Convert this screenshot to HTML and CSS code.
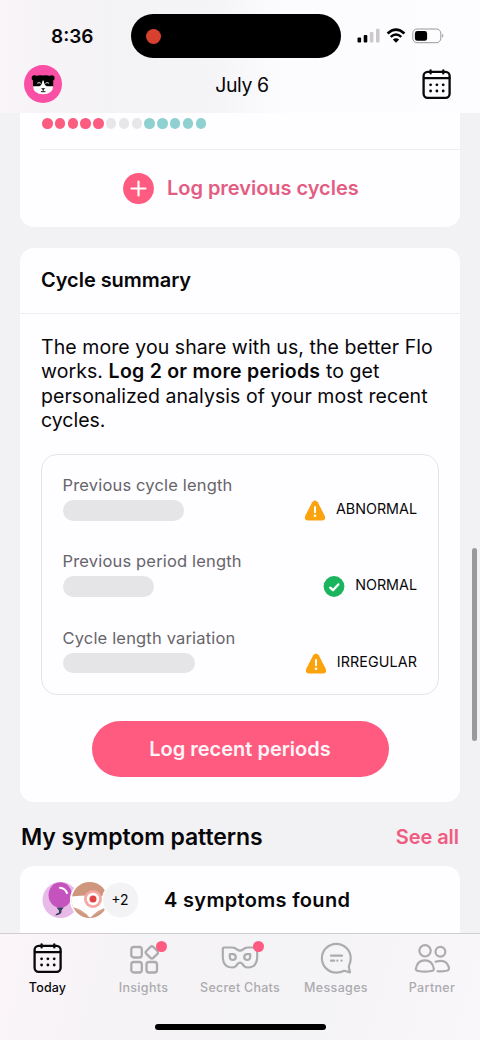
FILE: index.html
```html
<!DOCTYPE html>
<html lang="en">
<head>
<meta charset="utf-8">
<title>Flo</title>
<link rel="stylesheet" href="styles.css">
</head>
<body>
<svg width="0" height="0" class="defs">
  <symbol id="calendar" viewBox="0 0 30 31">
    <rect x="1.6" y="2.8" width="26" height="26" rx="4" fill="none" stroke="currentColor" stroke-width="2.3"/>
    <path d="M2 9.100H27.500M8.600 1.500V4.400M21.300 1.500V4.400" fill="none" stroke="currentColor" stroke-width="2.300" stroke-linecap="round"/>
    <g fill="currentColor"><circle cx="8.600" cy="15.800" r="1.400"/><circle cx="14.900" cy="15.800" r="1.400"/><circle cx="21.200" cy="15.800" r="1.400"/><circle cx="8.600" cy="22" r="1.400"/><circle cx="14.900" cy="22" r="1.400"/><circle cx="21.200" cy="22" r="1.400"/></g>
  </symbol>
  <symbol id="warning" viewBox="0 0 22 21">
    <path d="M8.200 2.200Q11-1.400 13.800 2.200L20.600 15.600Q22.400 20.400 18 20.500H4Q-.4 20.400 1.400 15.600Z" fill="#faa30f"/>
    <path d="M11 7V12.200" stroke="#fff" stroke-width="2" stroke-linecap="round"/><circle cx="11" cy="15.800" r="1.300" fill="#fff"/>
  </symbol>
</svg>
<div class="phone">
  <header class="header">
    <div class="status">
      <span class="time">8:36</span>
      <div class="island"><i class="rec"></i></div>
      <div class="signals">
        <svg width="23" height="16" viewBox="0 0 23 16"><rect x=".5" y="9.500" width="3.600" height="5" rx="1"/><rect x="6.700" y="7" width="3.600" height="7.500" rx="1"/><g fill="#cbc9cc"><rect x="12.800" y="4" width="3.600" height="10.500" rx="1"/><rect x="19" y=".8" width="3.600" height="13.700" rx="1"/></g></svg>
        <svg width="20" height="16" viewBox="0 0 20 16"><path d="M1.600 5.400Q10-2.300 18.400 5.400" fill="none" stroke="#000" stroke-width="2.700"/><path d="M4.700 8.900Q10 4.200 15.300 8.900" fill="none" stroke="#000" stroke-width="2.500"/><path d="M6.800 11.600Q10 8.800 13.200 11.600L10 14.800Z"/></svg>
        <svg width="32" height="16" viewBox="0 0 32 16"><rect x=".8" y="1" width="28" height="13.700" rx="4.300" fill="none" stroke="#98969a"/><rect x="2.900" y="3" width="12.200" height="9.800" rx="2.400"/><path d="M30.200 5.800Q32.500 7.800 30.200 10Z" fill="#98969a"/></svg>
      </div>
    </div>
    <div class="titlebar">
      <svg class="avatar" width="38" height="38" viewBox="0 0 38 38"><circle cx="19" cy="19" r="19" fill="#f94fa5"/><circle cx="10.500" cy="13" r="2.800"/><circle cx="27.800" cy="13" r="2.800"/><path d="M9 13Q12 9.500 19 10.400Q26 9.500 29.200 13V22H9Z"/><path d="M9 21.300H15.200Q17.800 20.800 18.600 15.500H19.600Q20.400 20.800 23 21.300H29.200Q28.700 29.200 19.100 29.200Q9.500 29.200 9 21.300Z" fill="#fff"/><path d="M13.200 18.300Q15 16.900 16.800 18.300M21.400 18.300Q23.200 16.900 25 18.300" fill="none" stroke="#fff" stroke-width=".9"/><path d="M17 23.200H21.400L19.200 25Z"/><path d="M19.200 24V26.400M16.900 26.700H21.500" stroke="#000" stroke-width=".9"/></svg>
      <h1>July 6</h1>
      <svg class="cal" width="30" height="31"><use href="#calendar"/></svg>
    </div>
  </header>

  <main class="content">
    <section class="card cycles">
      <div class="dots"><i class="p"></i><i class="p"></i><i class="p"></i><i class="p"></i><i class="p"></i><i></i><i></i><i></i><i class="f"></i><i class="f"></i><i class="f"></i><i class="f"></i><i class="f"></i></div>
      <a class="log-link"><svg width="31" height="31" viewBox="0 0 31 31"><circle cx="15.500" cy="15.500" r="15.400" fill="#ff5a7f"/><path d="M8.500 15.500H22.500M15.500 8.500V22.500" stroke="#fff" stroke-width="2.200" stroke-linecap="round"/></svg><span>Log previous cycles</span></a>
    </section>

    <section class="card summary">
      <h2>Cycle summary</h2>
      <p class="copy"><span class="l1">The more you share with us, the better Flo</span><br><span class="l2">works. <b>Log 2 or more periods</b> to get</span><br><span class="l3">personalized analysis of your most recent</span><br>cycles.</p>
      <div class="stats">
        <div class="stat">
          <div><span class="label">Previous cycle length</span><i class="bar long"></i></div>
          <div class="verdict"><svg width="22" height="21"><use href="#warning"/></svg><span>ABNORMAL</span></div>
        </div>
        <div class="stat">
          <div><span class="label">Previous period length</span><i class="bar short"></i></div>
          <div class="verdict"><svg width="22" height="21" viewBox="0 0 22 21"><circle cx="11" cy="10.500" r="10.400" fill="#19b45d"/><path d="M7.200 11.700L10 14.200L15.300 8.500" fill="none" stroke="#fff" stroke-width="2.400" stroke-linecap="round" stroke-linejoin="round"/></svg><span>NORMAL</span></div>
        </div>
        <div class="stat">
          <div><span class="label">Cycle length variation</span><i class="bar longer"></i></div>
          <div class="verdict"><svg width="22" height="21"><use href="#warning"/></svg><span class="wide">IRREGULAR</span></div>
        </div>
      </div>
      <button class="cta">Log recent periods</button>
    </section>

    <div class="section-head"><h3>My symptom patterns</h3><a>See all</a></div>

    <section class="card symptoms">
      <svg width="97" height="38" viewBox="0 0 97 38">
        <defs><clipPath id="c1"><circle cx="18.500" cy="19" r="18"/></clipPath><clipPath id="c2"><circle cx="47.700" cy="19" r="18"/></clipPath></defs>
        <g clip-path="url(#c1)"><rect width="38" height="38" fill="#e8bae8"/><ellipse cx="18.200" cy="14" rx="11.700" ry="12.700" fill="#c553bd"/><path d="M18 6.800Q23 7.300 25 12" fill="none" stroke="#fff" stroke-width="2" stroke-linecap="round"/><path d="M14.500 26.500H21.800L19.500 29.300Q20.500 33.500 13.500 34.500Q13.500 32.500 16.700 32L17 29.500Z" fill="#33405f"/></g>
        <circle cx="47.700" cy="19" r="19.800" fill="#fff"/>
        <g clip-path="url(#c2)"><rect x="29" width="38" height="38" fill="#cf967e"/><path d="M29 15.500Q48 13.500 67 15.500V25L48 36L29 25Z" fill="#fff"/><path d="M29 25Q41 27 48 36M67 25Q56 27 48 36" fill="#cf967e" stroke="#fff" stroke-width="1.400"/><circle cx="51" cy="18" r="9" fill="#f6a6a3"/><circle cx="51" cy="18" r="6.200" fill="#fff"/><circle cx="51" cy="18" r="3.500" fill="#e34344"/></g>
        <circle cx="78.700" cy="19" r="18.800" fill="#fff"/><circle cx="78.700" cy="19" r="17.600" fill="#f3f2f5"/>
        <text x="77.800" y="24" text-anchor="middle" class="more">+2</text>
      </svg>
      <strong>4 symptoms found</strong>
    </section>
    <i class="scrollbar"></i>
  </main>

  <nav class="tabs">
    <a class="tab active"><svg width="30" height="31"><use href="#calendar"/></svg><span>Today</span></a>
    <a class="tab"><svg width="30" height="31" viewBox="0 0 30 31" fill="none" stroke="currentColor" stroke-width="2.300"><rect x="2.300" y="4" width="10.500" height="10.500" rx="2.500"/><rect x="2.300" y="19" width="10.500" height="10.500" rx="2.500"/><rect x="17.500" y="19" width="10.500" height="10.500" rx="2.500"/><rect x="18" y="4.500" width="9.800" height="9.800" rx="2" transform="rotate(45 22.900 9.400)"/></svg><span>Insights</span><i class="badge"></i></a>
    <a class="tab"><svg width="38" height="31" viewBox="0 0 38 31" fill="none" stroke="currentColor" stroke-width="2.200" stroke-linejoin="round"><path d="M1.800 5.700Q1.800 4.500 3 4.500H11Q14.200 4.500 16 6.400Q19 9 22 6.400Q23.800 4.500 27 4.500H35Q36.200 4.500 36.200 5.700V15Q35.500 24.300 27 24.500Q23.200 24.500 21.500 21Q19 18.200 16.500 21Q14.800 24.500 11 24.500Q2.500 24.300 1.800 15Z"/><path d="M8.800 11.200H11.900Q14.800 11.400 14.800 14.200Q14.600 17 11.900 17Q8.900 16.800 8.800 14.200ZM29.200 11.200H26.100Q23.200 11.400 23.200 14.200Q23.400 17 26.100 17Q29.100 16.800 29.200 14.200Z"/></svg><span class="secret">Secret Chats</span><i class="badge"></i></a>
    <a class="tab"><svg width="32" height="33" viewBox="0 0 32 33" fill="none" stroke="currentColor" stroke-width="2.200" stroke-linecap="round" stroke-linejoin="round"><path d="M29.300 22.900Q30.700 19.800 30.700 16.200A14.400 14.400 0 1 0 16.300 30.600Q20.700 30.600 24.200 28.800L30 30.400L29.300 27Q28.300 25.200 29.300 22.900Z"/><path d="M11 13.700H22M11 18.700H14.200M17.300 18.700H17.400M21.500 18.700H21.600"/></svg><span>Messages</span></a>
    <a class="tab"><svg width="36" height="31" viewBox="0 0 37.500 32" fill="none" stroke="currentColor" stroke-width="2.300" stroke-linecap="round" stroke-linejoin="round"><circle cx="11.500" cy="8" r="5.900"/><circle cx="27.500" cy="9" r="5.100"/><path d="M4.500 29Q1.700 28.700 2 26.500Q3.500 18 11.300 18T20.600 26.500Q20.900 28.700 18 29Q11 30.200 4.500 29ZM22.500 19.400Q33.500 15.700 36.500 25.700Q36.800 28.100 34 28.800Q28.500 29.900 24.500 29.300"/></svg><span>Partner</span></a>
    <i class="home"></i>
  </nav>
</div>
</body>
</html>
```
FILE: styles.css
```css
* { box-sizing: border-box; }
body { margin: 0; font-family: Inter, "Liberation Sans", sans-serif; color: #08070a; }
h1, h2, h3, p { margin: 0; }
i { display: block; }
.defs { position: absolute; }
.phone { width: 480px; height: 1040px; display: flex; flex-direction: column; overflow: hidden; background: #f2f1f4; }

.header { height: 113px; flex: none; background: linear-gradient(90deg, #f9f5f9 0, #f3f2f5 22%, #f5f4f7 45%, #fcfbfe 58%, #fdfcff 100%); }
.status { display: grid; grid-template-columns: 131px 210px 139px; align-items: center; padding-top: 14px; }
.time { padding-left: 51px; font-size: 19px; font-weight: 600; }
.island { height: 44px; border-radius: 22px; background: #000; display: flex; align-items: center; padding-left: 15px; }
.rec { width: 15px; height: 15px; border-radius: 50%; background: #d8402f; }
.signals { display: flex; gap: 6px; padding-left: 16px; }
.titlebar { height: 52px; padding: 0 28px 0 24px; display: grid; grid-template-columns: 38px 1fr 30px; align-items: center; }
.titlebar h1 { font-size: 19.500px; font-weight: 400; text-align: center; letter-spacing: -.4px; padding-top: 1px; }

.content { position: relative; flex: 1; min-height: 0; overflow: hidden; padding: 0 20px; }
.card { background: #fefdff; border-radius: 14px; }
.cycles { height: 113.500px; border-radius: 0 0 14px 14px; padding-top: 5px; }
.dots { display: flex; gap: 2.300px; margin-left: 22px; height: 31px; }
.dots i { width: 10.500px; height: 10.500px; border-radius: 50%; background: #e7e6e8; }
.dots .p { background: #fb5c80; }
.dots .f { background: #8fd0d0; }
.log-link { display: flex; align-items: center; gap: 13px; margin-left: 20px; padding-left: 83px; height: 77px; border-top: 1.500px solid #eeedf0; color: #e35d83; font-size: 20px; font-weight: 600; letter-spacing: -.03px; }

.summary { margin-top: 21px; height: 554px; }
.summary h2 { height: 66px; line-height: 65px; padding-left: 21px; font-size: 20px; font-weight: 600; letter-spacing: -.05px; border-bottom: 1px solid #eeedf0; }
.copy { padding: 21px 0 0 21px; height: 140px; font-size: 19.500px; line-height: 24.500px; white-space: nowrap; }
.copy b { font-weight: 600; letter-spacing: .26px; }
.l1 { letter-spacing: .07px; }
.l2 { letter-spacing: .08px; }
.l3 { letter-spacing: .05px; }
.stats { margin: 0 21px; height: 241px; border: 1.500px solid #e6e4ea; border-radius: 16px; padding: 18.500px 21px 0 20.500px; }
.stat { display: flex; justify-content: space-between; height: 76.400px; }
.label { display: block; height: 27px; line-height: 24px; font-size: 16.500px; letter-spacing: .17px; color: #67656a; }
.bar { height: 20.500px; border-radius: 11px; background: #e5e4e6; }
.long { width: 121px; }
.short { width: 91px; }
.longer { width: 132px; }
.verdict { display: flex; align-items: flex-start; gap: 10px; padding-top: 27px; font-size: 14.300px; }
.verdict span { line-height: 17px; }
.verdict .wide { letter-spacing: .1px; }
.cta { display: block; width: 297px; height: 56px; margin: 26px auto 0; border: 0; border-radius: 28px; background: #ff5a7f; color: #fff5f8; font: 600 20px Inter, sans-serif; letter-spacing: 0; }

.section-head { display: flex; justify-content: space-between; align-items: center; height: 64px; padding: 6px 1px 0; }
.section-head h3 { font-size: 23px; font-weight: 600; letter-spacing: -.08px; }
.section-head a { font-size: 20px; font-weight: 600; letter-spacing: -.05px; color: #f05b82; }
.symptoms { height: 90px; padding: 15px 0 0 22px; display: flex; align-items: flex-start; gap: 25px; }
.symptoms strong { font-size: 20px; font-weight: 600; line-height: 38px; letter-spacing: .32px; }
.more { font-size: 14px; fill: #08070a; }
.scrollbar { position: absolute; left: 472px; top: 435px; width: 4.500px; height: 193px; border-radius: 3px; background: #9b999d; }

.tabs { position: relative; height: 107px; flex: none; border-top: 1.500px solid #cfcdd1; display: grid; grid-template-columns: 95px 97px repeat(3, 96px); background: linear-gradient(105deg, #fbf5f9 0, #f5f3f6 30%, #f4f3f6 62%, #faf7fa 100%); }
.tab { position: relative; display: flex; flex-direction: column; align-items: center; color: #acabae; font-size: 12.500px; font-weight: 500; letter-spacing: .34px; }
.tab svg { height: 33px; margin-top: 8px; flex: none; }
.tab span { line-height: 18px; margin-top: 4px; white-space: nowrap; }
.tab .secret { letter-spacing: .25px; }
.active { color: #08070a; letter-spacing: .15px; }
.badge { position: absolute; left: 61px; top: 7px; width: 11px; height: 11px; border-radius: 50%; background: #ff5a7f; }
.home { position: absolute; left: 155px; bottom: 10px; width: 171px; height: 6px; border-radius: 3px; background: #000; }
```
